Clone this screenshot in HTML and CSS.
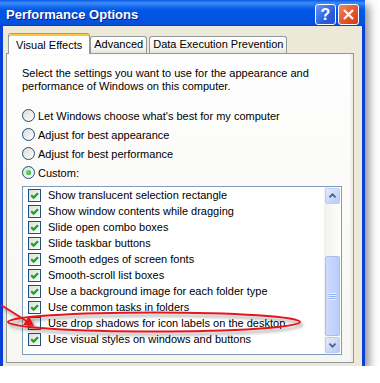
FILE: index.html
```html
<!DOCTYPE html>
<html lang="en">
<head>
  <meta charset="UTF-8" />
  <title>Performance Options</title>
  <link rel="stylesheet" href="styles.css">
</head>
<body>
  <div class="window">
    <div class="titlebar">
      <span class="title">Performance Options</span>
      <div class="title-buttons">
        <span class="tb help">?</span>
        <span class="tb close">
          <svg width="13" height="13" viewBox="0 0 13 13"><path d="M2 2 L11 11 M11 2 L2 11" stroke="#fff" stroke-width="2.2" fill="none"/></svg>
        </span>
      </div>
    </div>

    <div class="dialog-body">
      <div class="tabs">
        <div class="tab active">Visual Effects</div>
        <div class="tab">Advanced</div>
        <div class="tab">Data Execution Prevention</div>
      </div>

      <div class="panel">
        <p class="intro">Select the settings you want to use for the appearance and<br>performance of Windows on this computer.</p>

        <div class="options">
          <label class="option"><span class="radio"></span>Let Windows choose what's best for my computer</label>
          <label class="option"><span class="radio"></span>Adjust for best appearance</label>
          <label class="option"><span class="radio"></span>Adjust for best performance</label>
          <label class="option"><span class="radio checked"></span>Custom:</label>
        </div>

        <div class="listbox">
          <ul class="effects">
            <li><span class="check on"></span>Show translucent selection rectangle</li>
            <li><span class="check on"></span>Show window contents while dragging</li>
            <li><span class="check on"></span>Slide open combo boxes</li>
            <li><span class="check on"></span>Slide taskbar buttons</li>
            <li><span class="check on"></span>Smooth edges of screen fonts</li>
            <li><span class="check on"></span>Smooth-scroll list boxes</li>
            <li><span class="check on"></span>Use a background image for each folder type</li>
            <li><span class="check on"></span>Use common tasks in folders</li>
            <li><span class="check"></span>Use drop shadows for icon labels on the desktop</li>
            <li><span class="check on"></span>Use visual styles on windows and buttons</li>
          </ul>
          <div class="scrollbar">
            <div class="sb-btn">
              <svg width="15" height="16" viewBox="0 0 15 16"><path d="M4 9.5 L7.5 6 L11 9.5" stroke="#4d6185" stroke-width="2" fill="none"/></svg>
            </div>
            <div class="sb-track">
              <div class="sb-thumb"><span class="grip"></span></div>
            </div>
            <div class="sb-btn">
              <svg width="15" height="16" viewBox="0 0 15 16"><path d="M4 6.5 L7.5 10 L11 6.5" stroke="#4d6185" stroke-width="2" fill="none"/></svg>
            </div>
          </div>
        </div>
      </div>
    </div>
  </div>

  <!-- red markup drawn over the screenshot -->
  <svg class="markup" width="380" height="383" viewBox="0 0 380 383">
    <defs>
      <filter id="shade" x="-10%" y="-50%" width="120%" height="200%">
        <feDropShadow dx="2" dy="3" stdDeviation="1.5" flood-color="#000" flood-opacity="0.35"/>
      </filter>
    </defs>
    <g filter="url(#shade)">
      <ellipse cx="154" cy="322" rx="146" ry="9.5" fill="none" stroke="#e3161e" stroke-width="2"/>
      <path d="M1 305 L28 322" stroke="#e3161e" stroke-width="2" fill="none"/>
      <polygon points="34,326 23,325 29,316" fill="#e3161e"/>
    </g>
  </svg>
</body>
</html>
```

FILE: styles.css
```css
* {
  margin: 0;
  padding: 0;
  box-sizing: border-box;
}

body {
  background: #fff;
  font-family: 'Liberation Sans', Arial, sans-serif;
  font-size: 11px;
  color: #000;
}

.window {
  width: 365px;
  box-shadow: 4px 5px 9px rgba(0, 0, 0, 0.45);
}

.titlebar {
  height: 26px;
  padding: 3px 6px 0 6px;
  display: flex;
  align-items: center;
  justify-content: space-between;
  background: linear-gradient(to bottom, #0a5be6 0, #3c8cf7 3px, #1f6ef0 6px, #0058e6 10px, #0054e3 18px, #0a50d8 24px, #003dd0 26px);
}

.title {
  font-weight: bold;
  font-size: 13px;
  color: #fff;
  text-shadow: 1px 1px 0 #0a1d8a;
}

.title-buttons {
  display: flex;
  gap: 2px;
}

.tb {
  width: 21px;
  height: 21px;
  border: 1px solid #fff;
  border-radius: 3px;
  display: flex;
  align-items: center;
  justify-content: center;
  color: #fff;
}

.help {
  background: linear-gradient(135deg, #6a98f7, #2a5ee0 60%, #2452cf);
  font-weight: bold;
  font-size: 16px;
}

.close {
  background: linear-gradient(135deg, #ec8a63, #e0522a 60%, #c8421c);
}

.dialog-body {
  background: #ece9d8;
  border-left: 3px solid #0a3fd9;
  border-right: 3px solid #0a3fd9;
  padding: 7px 8px 3px 3px;
}

.tabs {
  display: flex;
  align-items: flex-end;
  padding-left: 2px;
  margin-bottom: -1px;
}

.tab {
  height: 17px;
  margin-bottom: 1px;
  padding: 0 3px 2px 3px;
  line-height: 14px;
  border: 1px solid #919b9c;
  border-bottom: none;
  border-radius: 3px 3px 0 0;
  background: linear-gradient(to bottom, #fff, #f4f3ee 70%, #e6e4da);
  white-space: nowrap;
}

.tab + .tab + .tab {
  margin-left: 2px;
}

.tab.active {
  position: relative;
  z-index: 1;
  height: 21px;
  margin-bottom: 0;
  padding: 2px 7px 0 7px;
  line-height: 18px;
  background: #fff;
  border-top: 1px solid #e68b2c;
  box-shadow: inset 0 2px 0 #ffc83c;
}

.panel {
  border: 1px solid #919b9c;
  background: linear-gradient(to bottom, #fefefe, #f7f6f2);
  box-shadow: inset -2px 0 2px #ebe9e1;
  padding: 13px 0 7px 15px;
}

.intro {
  line-height: 13px;
}

.options {
  margin-top: 13px;
}

.option {
  height: 19px;
  display: flex;
  align-items: center;
  gap: 3px;
}

.radio {
  width: 13px;
  height: 13px;
  border: 1px solid #1c5180;
  border-radius: 50%;
  background: linear-gradient(135deg, #dcdbd5, #fff);
  display: flex;
  align-items: center;
  justify-content: center;
}

.radio.checked::after {
  content: '';
  width: 5px;
  height: 5px;
  border-radius: 50%;
  background: radial-gradient(circle at 35% 35%, #6fe46b, #21a121);
}

.listbox {
  margin-top: 4px;
  width: 320px;
  height: 169px;
  border: 1px solid #7f9db9;
  background: #fff;
  display: flex;
}

.effects {
  flex: 1;
  list-style: none;
  padding: 0 0 0 5px;
}

.effects li {
  height: 16px;
  display: flex;
  align-items: center;
  gap: 7px;
  white-space: nowrap;
}

.check {
  width: 13px;
  height: 13px;
  border: 1px solid #1c5180;
  background: linear-gradient(135deg, #dcdcd7, #fff);
}

.check.on {
  background: url("data:image/svg+xml,%3Csvg xmlns='http://www.w3.org/2000/svg' width='11' height='11'%3E%3Cpath d='M2.2 5.2 L4.6 7.6 L9 3.2' stroke='%2321a121' stroke-width='2.3' fill='none'/%3E%3C/svg%3E") no-repeat, linear-gradient(135deg, #dcdcd7, #fff);
}

.scrollbar {
  width: 17px;
  padding: 1px;
  display: flex;
  flex-direction: column;
  background: linear-gradient(to right, #f3f1ec, #fefefb);
}

.sb-btn {
  height: 16px;
  border: 1px solid #bbccf5;
  border-radius: 2px;
  background: linear-gradient(135deg, #e3ebfe, #b6caf6);
  display: flex;
  align-items: center;
  justify-content: center;
}

.sb-track {
  flex: 1;
  display: flex;
  flex-direction: column;
}

.sb-thumb {
  margin-top: auto;
  margin-bottom: 1px;
  height: 80px;
  border: 1px solid #a9bff2;
  border-radius: 2px;
  background: linear-gradient(to right, #cddafd, #b9cdfa);
  display: flex;
  align-items: center;
  justify-content: center;
}

.grip {
  width: 7px;
  height: 7px;
  background: repeating-linear-gradient(to bottom, #eef4fe 0, #eef4fe 1px, #8cb0f8 1px, #8cb0f8 2px);
}

.markup {
  position: absolute;
  top: 0;
  left: 0;
  pointer-events: none;
}
```
